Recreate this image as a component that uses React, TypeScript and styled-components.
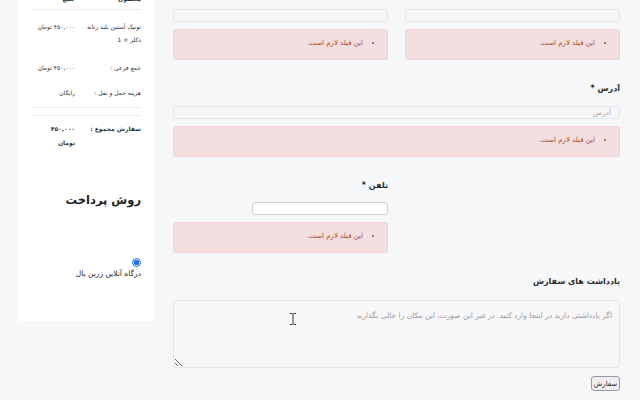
import React from 'react'
import styled, { createGlobalStyle } from 'styled-components'

const GlobalStyle = createGlobalStyle`
	html, body {
		margin: 0;
		padding: 0;
		background: #f6f7f9;
	}
	body {
		font-family: "DejaVu Sans", sans-serif;
		overflow: hidden;
	}
`

const Page = styled.div`
	position: relative;
	direction: rtl;
	display: flex;
	align-items: flex-start;
	gap: 19px;
	padding: 0 20px 0 18px;
	height: 400px;
	overflow: hidden;
	box-sizing: border-box;
`

const Main = styled.div`
	width: 447px;
	padding-top: 9px;
	display: flex;
	flex-direction: column;
`

const TwoCols = styled.div`
	display: grid;
	grid-template-columns: 215px 215px;
	column-gap: 17px;
	align-items: start;
`

const Col = styled.div`
	display: flex;
	flex-direction: column;
`

const Field = styled.input<{ $white?: boolean; $width?: number }>`
	display: block;
	box-sizing: border-box;
	width: ${(p) => (p.$width ? `${p.$width}px` : '100%')};
	height: 13px;
	margin: 0;
	padding: 0 8px;
	border: 1px solid ${(p) => (p.$white ? '#cfcfd4' : '#e6e6ea')};
	border-radius: 3px;
	background: ${(p) => (p.$white ? '#fff' : '#f7f7f9')};
	font-family: inherit;
	font-size: 7.5px;
	color: #555;
	&::placeholder {
		color: #aaa;
	}
`

const Gap = styled.div<{ $h: number }>`
	height: ${(p) => p.$h}px;
	flex: none;
`

const ErrorBox = styled.ul`
	box-sizing: border-box;
	height: 31px;
	margin: 7px 0 0;
	padding: 7px 24px 0 0;
	background: #f2dede;
	border: 1px solid #efd5d8;
	border-radius: 3px;
	color: #a94442;
	font-size: 7px;
	line-height: 12px;
	list-style: disc;
`

const Label = styled.label`
	display: block;
	margin-top: 23px;
	font-size: 8px;
	line-height: 12px;
	font-weight: bold;
	color: #2b2b2b;
`

const Notes = styled.textarea`
	display: block;
	box-sizing: border-box;
	width: 100%;
	height: 68px;
	margin: 12px 0 0;
	padding: 9px 7px;
	background: #f7f7f9;
	border: 1px solid #e6e6ea;
	border-radius: 3px;
	font-family: inherit;
	font-size: 7.5px;
	line-height: 11px;
	resize: vertical;
	&::placeholder {
		color: #9a9a9a;
	}
`

const Submit = styled.button`
	align-self: flex-start;
	margin-top: 8px;
	width: 29px;
	height: 15px;
	padding: 0;
	background: #efeff1;
	border: 1px solid #9a9aa4;
	border-radius: 3px;
	font-family: inherit;
	font-size: 7px;
	color: #222;
`

const Sidebar = styled.aside`
	width: 136px;
	box-sizing: border-box;
	background: #fff;
	margin-top: -12px;
	padding: 4px 13px 41px 14px;
	font-size: 6px;
	color: #333;
`

const Row = styled.div<{ $pad: string; $line?: 'top' | 'bottom'; $bold?: boolean }>`
	display: grid;
	grid-template-columns: 58px 43px;
	column-gap: 8px;
	padding: ${(p) => p.$pad};
	line-height: ${(p) => (p.$bold ? 14 : 13)}px;
	font-weight: ${(p) => (p.$bold ? 'bold' : 'normal')};
	border-${(p) => p.$line ?? 'bottom'}: ${(p) => (p.$line ? '1px solid #ececec' : 'none')};
	margin-top: ${(p) => (p.$line === 'top' ? 7 : 0)}px;
`

const Heading = styled.h3`
	margin: 40px 0 0;
	font-size: 11.5px;
	line-height: 20px;
	font-weight: bold;
	color: #222;
`

const Radio = styled.input`
	display: block;
	width: 9px;
	height: 9px;
	margin: 48px 0 0;
	accent-color: #1a73e8;
`

const RadioLabel = styled.div`
	margin-top: 1px;
	line-height: 12px;
	font-size: 7.5px;
	color: #222;
`

const Cursor = styled.svg`
	position: absolute;
	left: 289px;
	top: 313px;
`

const required = 'این فیلد لازم است.'

function Err() {
	return (
		<ErrorBox>
			<li>{required}</li>
		</ErrorBox>
	)
}

export default function App() {
	return (
		<Page>
			<GlobalStyle />
			<Main>
				<TwoCols>
					<Col>
						<Field />
						<Err />
					</Col>
					<Col>
						<Field />
						<Err />
					</Col>
				</TwoCols>

				<Label>آدرس *</Label>
				<Gap $h={11} />
				<Field placeholder="آدرس" />
				<Err />

				<TwoCols>
					<Col />
					<Col>
						<Label>تلفن *</Label>
						<Gap $h={10} />
						<Field $white $width={136} />
						<Err />
					</Col>
				</TwoCols>

				<Label>یادداشت های سفارش</Label>
				<Notes placeholder="اگر یادداشتی دارید در اینجا وارد کنید. در غیر این صورت، این مکان را خالی بگذارید" />
				<Submit>سفارش</Submit>
			</Main>

			<Sidebar>
				<Row $pad="0 0 3px" $line="bottom" $bold>
					<span>محصول</span>
					<span>جمع</span>
				</Row>
				<Row $pad="10px 0 8px">
					<span>تونیک آستین بلند زنانه دکلر × 1</span>
					<span>۴۵۰,۰۰۰ تومان</span>
				</Row>
				<Row $pad="7px 0 6px">
					<span>جمع فرعی :</span>
					<span>۴۵۰,۰۰۰ تومان</span>
				</Row>
				<Row $pad="6px 0 8px" $line="bottom">
					<span>هزینه حمل و نقل :</span>
					<span>رایگان</span>
				</Row>
				<Row $pad="6px 0 0" $line="top" $bold>
					<span>سفارش مجموع :</span>
					<span>۴۵۰,۰۰۰ تومان</span>
				</Row>

				<Heading>روش پرداخت</Heading>
				<Radio type="radio" name="pay" defaultChecked />
				<RadioLabel>درگاه آنلاین زرین پال</RadioLabel>
			</Sidebar>

			<Cursor width="8" height="12" viewBox="0 0 8 12">
				<path d="M1 0.5h2.5M4.5 0.5H7M4 1v10M1 11.5h2.5M4.5 11.5H7" stroke="#333" strokeWidth="1" fill="none" />
			</Cursor>
		</Page>
	)
}
